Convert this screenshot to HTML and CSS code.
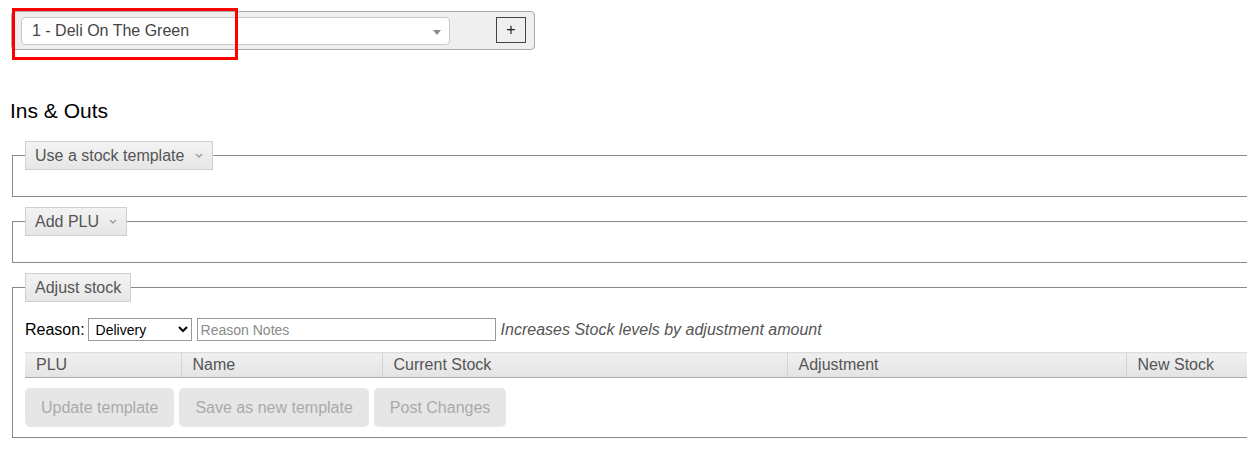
FILE: index.html
```html
<!DOCTYPE html>
<html lang="en">
<head>
<meta charset="utf-8">
<title>Ins &amp; Outs</title>
<link rel="stylesheet" href="styles.css">
</head>
<body>
<div class="page">
  <div class="site-bar">
    <div class="site-select">
      <span class="site-select-text">1 - Deli On The Green</span>
      <span class="site-select-arrow"></span>
    </div>
    <button class="add-btn" type="button">+</button>
    <div class="highlight"></div>
  </div>

  <h1 class="title">Ins &amp; Outs</h1>

  <fieldset class="panel">
    <legend class="panel-legend">Use a stock template
      <svg class="chev" width="8" height="5" viewBox="0 0 8 5"><path d="M1 1 L4 4 L7 1" fill="none" stroke="#9a9a9a" stroke-width="1.3"/></svg>
    </legend>
    <div class="panel-empty"></div>
  </fieldset>

  <fieldset class="panel">
    <legend class="panel-legend">Add PLU
      <svg class="chev" width="8" height="5" viewBox="0 0 8 5"><path d="M1 1 L4 4 L7 1" fill="none" stroke="#9a9a9a" stroke-width="1.3"/></svg>
    </legend>
    <div class="panel-empty"></div>
  </fieldset>

  <fieldset class="panel">
    <legend class="panel-legend">Adjust stock</legend>
    <div class="reason-row">
      <label class="reason-label" for="reason">Reason:</label>
      <select id="reason" class="reason-select">
        <option>Delivery</option>
      </select>
      <input class="reason-notes" type="text" placeholder="Reason Notes">
      <span class="reason-hint">Increases Stock levels by adjustment amount</span>
    </div>
    <table class="stock-table">
      <colgroup>
        <col class="c-plu"><col class="c-name"><col class="c-cur"><col class="c-adj"><col>
      </colgroup>
      <thead>
        <tr>
          <th>PLU</th>
          <th>Name</th>
          <th>Current Stock</th>
          <th>Adjustment</th>
          <th>New Stock</th>
        </tr>
      </thead>
    </table>
    <div class="actions">
      <button class="action-btn" type="button" disabled>Update template</button>
      <button class="action-btn" type="button" disabled>Save as new template</button>
      <button class="action-btn" type="button" disabled>Post Changes</button>
    </div>
  </fieldset>
</div>
</body>
</html>
```

FILE: styles.css
```css
html, body {
  margin: 0;
  padding: 0;
  overflow: hidden;
  background: #fff;
}

body {
  font-family: "Liberation Sans", Arial, sans-serif;
  font-size: 16px;
  color: #333;
}

.page {
  width: 1320px;
  padding-top: 11px;
}

.site-bar {
  position: relative;
  display: flex;
  align-items: flex-start;
  justify-content: space-between;
  box-sizing: border-box;
  width: 524px;
  height: 39px;
  margin-left: 11px;
  padding: 5px 8px 0 9px;
  background: #efefef;
  border: 1px solid #aaa;
  border-radius: 4px;
}

.site-select {
  position: relative;
  box-sizing: border-box;
  width: 429px;
  height: 28px;
  padding: 0 24px 0 10px;
  background: #fff;
  border: 1px solid #c8c8c8;
  border-radius: 4px;
  display: flex;
  align-items: center;
}

.site-select-text {
  color: #444;
  font-size: 16px;
  line-height: 20px;
}

.site-select-arrow {
  position: absolute;
  right: 8px;
  top: 12px;
  width: 0;
  height: 0;
  border-style: solid;
  border-width: 5px 4px 0 4px;
  border-color: #888 transparent transparent transparent;
}

.add-btn {
  box-sizing: border-box;
  width: 30px;
  height: 26px;
  margin: 0;
  padding: 0;
  background: #efefef;
  border: 1px solid #444;
  border-radius: 0;
  font-family: "Liberation Sans", Arial, sans-serif;
  font-size: 16px;
  line-height: 20px;
  color: #222;
}

.highlight {
  position: absolute;
  left: 0;
  top: -4px;
  width: 226px;
  height: 52px;
  box-sizing: border-box;
  border: 3px solid #f00;
  pointer-events: none;
}

.title {
  margin: 49px 0 18px 10px;
  font-size: 21px;
  line-height: 24px;
  font-weight: normal;
  color: #000;
}

.panel {
  box-sizing: border-box;
  width: 1300px;
  margin: 0 0 10px 12px;
  padding: 0 12px 10px 12px;
  border: 1px solid #888;
  min-width: 0;
}

.panel-legend {
  box-sizing: border-box;
  height: 29px;
  padding: 5px 9px 4px 9px;
  margin: 0;
  background: linear-gradient(#f3f3f3, #e6e6e6);
  border: 1px solid #cfcfcf;
  color: #555;
  font-size: 16px;
  line-height: 18px;
}

.chev {
  margin-left: 6px;
  vertical-align: 3px;
}

.panel-empty {
  height: 16px;
}

.reason-row {
  display: flex;
  align-items: center;
  height: 23px;
  margin-top: 16px;
}

.reason-label {
  color: #000;
  font-size: 16px;
  margin-right: 3px;
}

.reason-select {
  box-sizing: border-box;
  width: 104px;
  height: 23px;
  margin: 0 5px 0 0;
  padding: 0 0 0 3px;
  border: 1px solid #999;
  border-radius: 0;
  background: #fff;
  font-family: "Liberation Sans", Arial, sans-serif;
  font-size: 14px;
  color: #000;
}

.reason-notes {
  box-sizing: border-box;
  width: 299px;
  height: 23px;
  margin: 0 5px 0 0;
  padding: 0 3px;
  border: 1px solid #999;
  border-radius: 0;
  font-family: "Liberation Sans", Arial, sans-serif;
  font-size: 14px;
  color: #333;
}

.reason-notes::placeholder {
  color: #8a8a8a;
}

.reason-hint {
  font-style: italic;
  color: #555;
  font-size: 16px;
}

.stock-table {
  width: 100%;
  margin-top: 11px;
  border-collapse: collapse;
  table-layout: fixed;
}

.c-plu { width: 156px; }
.c-name { width: 201px; }
.c-cur { width: 405px; }
.c-adj { width: 339px; }

.stock-table th {
  height: 24px;
  padding: 3px 0 3px 11px;
  box-sizing: border-box;
  text-align: left;
  font-weight: normal;
  font-size: 16px;
  line-height: 18px;
  color: #555;
  background: linear-gradient(#f0f0f0, #e4e4e4);
  border-top: 1px solid #ddd;
  border-bottom: 1px solid #aaa;
  border-left: 1px solid #d4d4d4;
}

.stock-table th:first-child {
  border-left: none;
}

.actions {
  display: flex;
  gap: 5px;
  margin-top: 10px;
}

.action-btn {
  box-sizing: border-box;
  height: 39px;
  margin: 0;
  padding: 0 16px;
  background: #e6e6e6;
  border: none;
  border-radius: 5px;
  font-family: "Liberation Sans", Arial, sans-serif;
  font-size: 16px;
  color: #aaa;
}
```
